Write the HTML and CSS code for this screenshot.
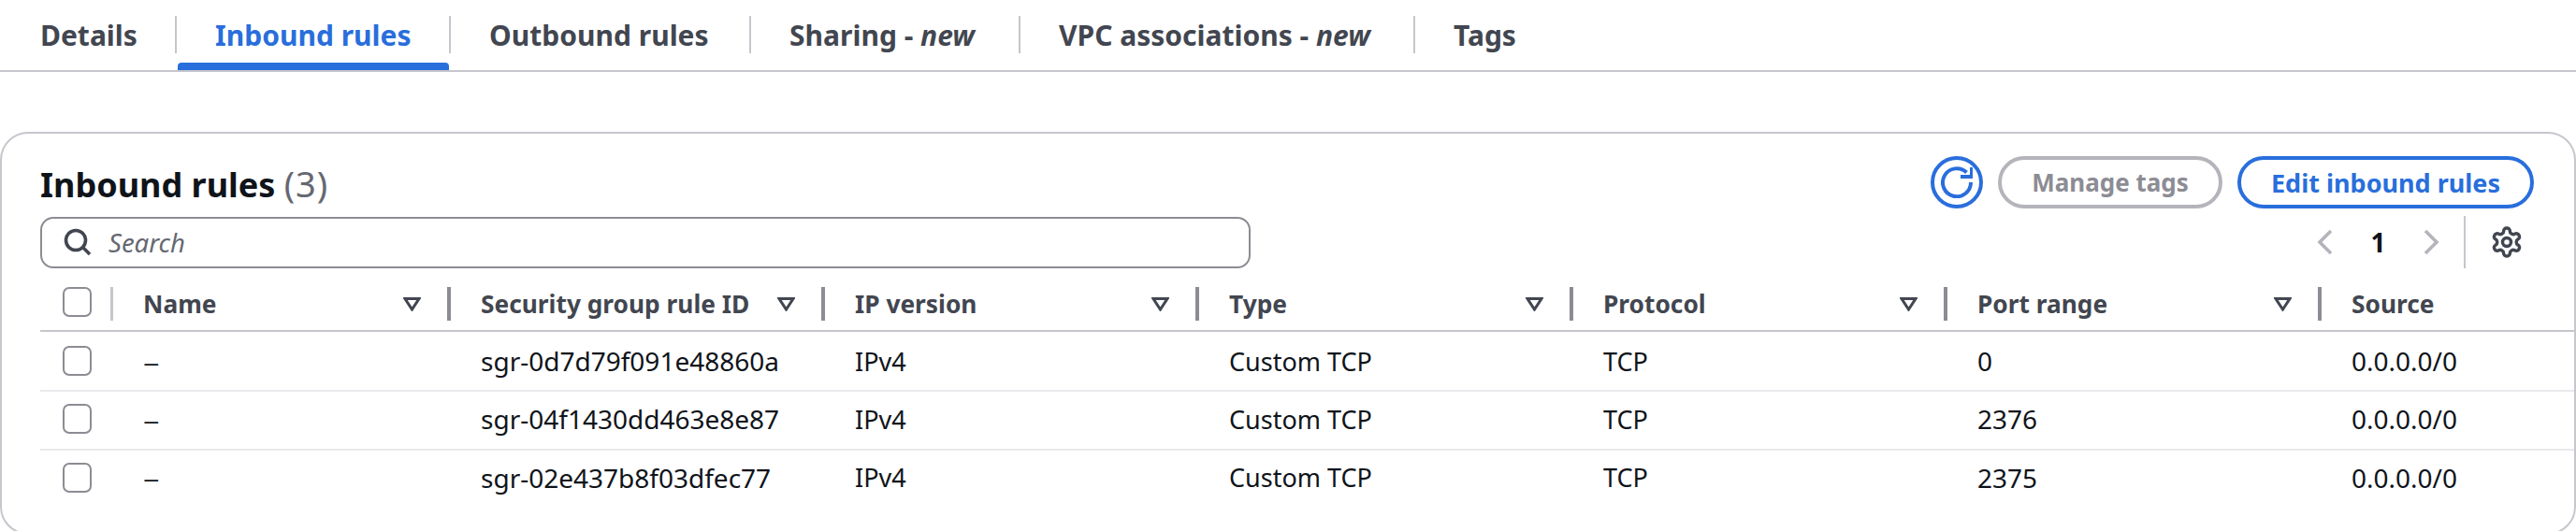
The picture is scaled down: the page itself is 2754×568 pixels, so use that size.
FILE: index.html
```html
<!DOCTYPE html>
<html lang="en">
<head>
<meta charset="utf-8">
<title>Inbound rules</title>
<link rel="stylesheet" href="styles.css">
</head>
<body>
<nav class="tabs">
  <a class="tab">Details</a>
  <a class="tab tab-active">Inbound rules</a>
  <a class="tab">Outbound rules</a>
  <a class="tab"><span>Sharing - <em>new</em></span></a>
  <a class="tab"><span>VPC associations - <em>new</em></span></a>
  <a class="tab tab-last">Tags</a>
</nav>
<section class="card">
  <header class="card-head">
    <h2 class="title">Inbound rules <span class="count">(3)</span></h2>
    <div class="actions">
      <button class="icon-btn" aria-label="Refresh">
        <svg class="refresh" viewBox="0 0 34 34" fill="none" stroke="currentColor" stroke-width="4"><path d="M32 17A15 15 0 1 1 27.5 6.5"/><path d="M33 1V11H21"/></svg>
      </button>
      <button class="btn btn-disabled">Manage tags</button>
      <button class="btn btn-primary">Edit inbound rules</button>
    </div>
  </header>
  <div class="tools">
    <div class="search">
      <svg class="search-icon" viewBox="0 0 30 30" fill="none" stroke="currentColor" stroke-width="3.6"><circle cx="13" cy="13" r="10.5"/><path d="M20.5 20.5L28 28"/></svg>
      <span class="search-text">Search</span>
    </div>
    <div class="pager">
      <svg class="chev" viewBox="0 0 18 28" fill="none" stroke="currentColor" stroke-width="3.6"><path d="M15 2L3 14L15 26"/></svg>
      <span class="page">1</span>
      <svg class="chev" viewBox="0 0 18 28" fill="none" stroke="currentColor" stroke-width="3.6"><path d="M3 2L15 14L3 26"/></svg>
      <span class="pager-sep"></span>
      <svg class="gear" viewBox="0 0 24 24" fill="none" stroke="currentColor" stroke-width="2.3" stroke-linejoin="round"><path d="M12.22 2h-.44a2 2 0 0 0-2 2v.18a2 2 0 0 1-1 1.73l-.43.25a2 2 0 0 1-2 0l-.15-.08a2 2 0 0 0-2.73.73l-.22.38a2 2 0 0 0 .73 2.73l.15.1a2 2 0 0 1 1 1.72v.51a2 2 0 0 1-1 1.74l-.15.09a2 2 0 0 0-.73 2.73l.22.38a2 2 0 0 0 2.73.73l.15-.08a2 2 0 0 1 2 0l.43.25a2 2 0 0 1 1 1.73V20a2 2 0 0 0 2 2h.44a2 2 0 0 0 2-2v-.18a2 2 0 0 1 1-1.73l.43-.25a2 2 0 0 1 2 0l.15.08a2 2 0 0 0 2.73-.73l.22-.39a2 2 0 0 0-.73-2.73l-.15-.08a2 2 0 0 1-1-1.74v-.5a2 2 0 0 1 1-1.74l.15-.09a2 2 0 0 0 .73-2.73l-.22-.38a2 2 0 0 0-2.73-.73l-.15.08a2 2 0 0 1-2 0l-.43-.25a2 2 0 0 1-1-1.73V4a2 2 0 0 0-2-2z"/><circle cx="12" cy="12" r="3"/></svg>
    </div>
  </div>
  <div class="table">
    <div class="row row-head">
      <div class="cell-select"><span class="check"></span><span class="sep sep-light"></span></div>
      <div class="th"><span class="th-label">Name</span><svg class="tri" viewBox="0 0 19 15" fill="none" stroke="currentColor" stroke-width="3"><path d="M2 1.5H17L9.5 13Z"/></svg><span class="sep"></span></div>
      <div class="th"><span class="th-label">Security group rule ID</span><svg class="tri" viewBox="0 0 19 15" fill="none" stroke="currentColor" stroke-width="3"><path d="M2 1.5H17L9.5 13Z"/></svg><span class="sep"></span></div>
      <div class="th"><span class="th-label">IP version</span><svg class="tri" viewBox="0 0 19 15" fill="none" stroke="currentColor" stroke-width="3"><path d="M2 1.5H17L9.5 13Z"/></svg><span class="sep"></span></div>
      <div class="th"><span class="th-label">Type</span><svg class="tri" viewBox="0 0 19 15" fill="none" stroke="currentColor" stroke-width="3"><path d="M2 1.5H17L9.5 13Z"/></svg><span class="sep"></span></div>
      <div class="th"><span class="th-label">Protocol</span><svg class="tri" viewBox="0 0 19 15" fill="none" stroke="currentColor" stroke-width="3"><path d="M2 1.5H17L9.5 13Z"/></svg><span class="sep"></span></div>
      <div class="th"><span class="th-label">Port range</span><svg class="tri" viewBox="0 0 19 15" fill="none" stroke="currentColor" stroke-width="3"><path d="M2 1.5H17L9.5 13Z"/></svg><span class="sep"></span></div>
      <div class="th th-last"><span class="th-label">Source</span></div>
    </div>
    <div class="row row-body">
      <div class="cell-select"><span class="check"></span></div>
      <div class="td dash">–</div><div class="td">sgr-0d7d79f091e48860a</div><div class="td td-word">IPv4</div><div class="td td-word">Custom TCP</div><div class="td td-word">TCP</div><div class="td">0</div><div class="td">0.0.0.0/0</div>
    </div>
    <div class="row row-body">
      <div class="cell-select"><span class="check"></span></div>
      <div class="td dash">–</div><div class="td">sgr-04f1430dd463e8e87</div><div class="td td-word">IPv4</div><div class="td td-word">Custom TCP</div><div class="td td-word">TCP</div><div class="td">2376</div><div class="td">0.0.0.0/0</div>
    </div>
    <div class="row row-body">
      <div class="cell-select"><span class="check"></span></div>
      <div class="td dash">–</div><div class="td">sgr-02e437b8f03dfec77</div><div class="td td-word">IPv4</div><div class="td td-word">Custom TCP</div><div class="td td-word">TCP</div><div class="td">2375</div><div class="td">0.0.0.0/0</div>
    </div>
  </div>
</section>
</body>
</html>
```

FILE: styles.css
```css
* { box-sizing: border-box; }
html, body { margin: 0; padding: 0; background: #fff; }
body {
  width: 2754px;
  height: 568px;
  overflow: hidden;
  font-family: "Noto Sans", "Open Sans", sans-serif;
  color: #0f141a;
  font-size: 28px;
}

/* Tabs */
.tabs {
  display: grid;
  grid-template-columns: 189px 293px 321px 288px 422px 1fr;
  align-items: start;
  height: 77px;
  padding-top: 17px;
  border-bottom: 2px solid #c6c6cd;
}
.tab {
  position: relative;
  display: flex;
  align-items: center;
  height: 40px;
  padding-left: 41px;
  border-right: 2px solid #c6c6cd;
  font-size: 30px;
  font-weight: 700;
  color: #424650;
  white-space: nowrap;
}
.tab:first-child { padding-left: 43px; }
.tab-last { border-right: 0; }
.tab-active { color: #296edc; }
.tab-active::after {
  content: "";
  position: absolute;
  left: 1px;
  right: 0;
  top: 50px;
  height: 8px;
  background: #296edc;
  border-radius: 4px 4px 0 0;
}
.tab em { font-style: italic; }

/* Card */
.card {
  margin-top: 64px;
  height: 431px;
  padding: 24px 41px 0;
  border: 2px solid #c6c6cd;
  border-radius: 30px;
}
.card-head {
  display: flex;
  justify-content: space-between;
  align-items: center;
  height: 56px;
  padding-right: 2px;
}
.title {
  margin: 2px 0 0;
  font-size: 36px;
  font-weight: 700;
  color: #0f141a;
}
.count { font-weight: 400; font-size: 38px; letter-spacing: 1px; color: #656871; }
.actions { display: flex; align-items: center; gap: 16px; }
.icon-btn {
  display: flex;
  align-items: center;
  justify-content: center;
  width: 56px;
  height: 56px;
  padding: 0;
  background: #fff;
  border: 4px solid #296edc;
  border-radius: 50%;
  color: #296edc;
}
.refresh { width: 34px; height: 34px; }
.btn {
  height: 56px;
  padding: 0;
  background: #fff;
  border: 4px solid;
  border-radius: 28px;
  font-family: inherit;
  font-weight: 700;
}
.btn-disabled { width: 240px; font-size: 26px; border-color: #b4b4bb; color: #8c8c94; }
.btn-primary { width: 317px; font-size: 27px; border-color: #296edc; color: #296edc; }

/* Search and pagination */
.tools {
  display: flex;
  justify-content: space-between;
  align-items: center;
  height: 56px;
  margin-top: 8px;
}
.search {
  display: flex;
  align-items: center;
  width: 1294px;
  height: 55px;
  padding-left: 23px;
  border: 2px solid #8c8c94;
  border-radius: 14px;
}
.search-icon { width: 30px; height: 30px; color: #424650; }
.search-text { margin-left: 18px; font-style: italic; color: #656871; font-size: 27.5px; }
.pager { display: flex; align-items: center; margin-right: 13px; }
.chev { width: 18px; height: 28px; color: #b4b4bb; }
.page { width: 95px; text-align: center; font-size: 28px; font-weight: 700; }
.pager-sep { width: 2px; height: 56px; margin: 0 26px; background: #c6c6cd; }
.gear { width: 36px; height: 36px; color: #424650; }

/* Table */
.table { margin: 20px -41px 0 0; }
.row {
  display: grid;
  grid-template-columns: 78px 361px 400px 400px 400px 400px 400px 1fr;
}
.row-head {
  height: 48px;
  border-bottom: 2px solid #c6c6cd;
  align-items: start;
}
.row-body {
  height: 62.3px;
  padding-bottom: 2px;
  align-items: center;
  border-top: 2px solid #e9e9ed;
}
.row-head + .row-body { border-top: 0; padding-bottom: 0; }
.cell-select {
  display: flex;
  align-items: flex-start;
  justify-content: space-between;
  padding-left: 24px;
}
.check {
  width: 31px;
  height: 32px;
  background: #fff;
  border: 2px solid #8c8c94;
  border-radius: 7px;
}
.sep { width: 4px; height: 36px; background: #8c8c94; flex: none; }
.sep-light { width: 3px; background: #c6c6cd; }
.th {
  display: flex;
  align-items: center;
  height: 36px;
  padding-left: 32px;
  font-weight: 700;
  font-size: 26.3px;
  color: #424650;
}
.th-label { flex: 1; white-space: nowrap; }
.tri { width: 19px; height: 15px; margin-right: 28px; color: #424650; }
.td { padding-left: 32px; font-size: 28px; color: #0f141a; white-space: nowrap; }
.td-word { font-size: 27px; }
.dash { font-size: 35px; font-weight: 300; line-height: 1; }
```
